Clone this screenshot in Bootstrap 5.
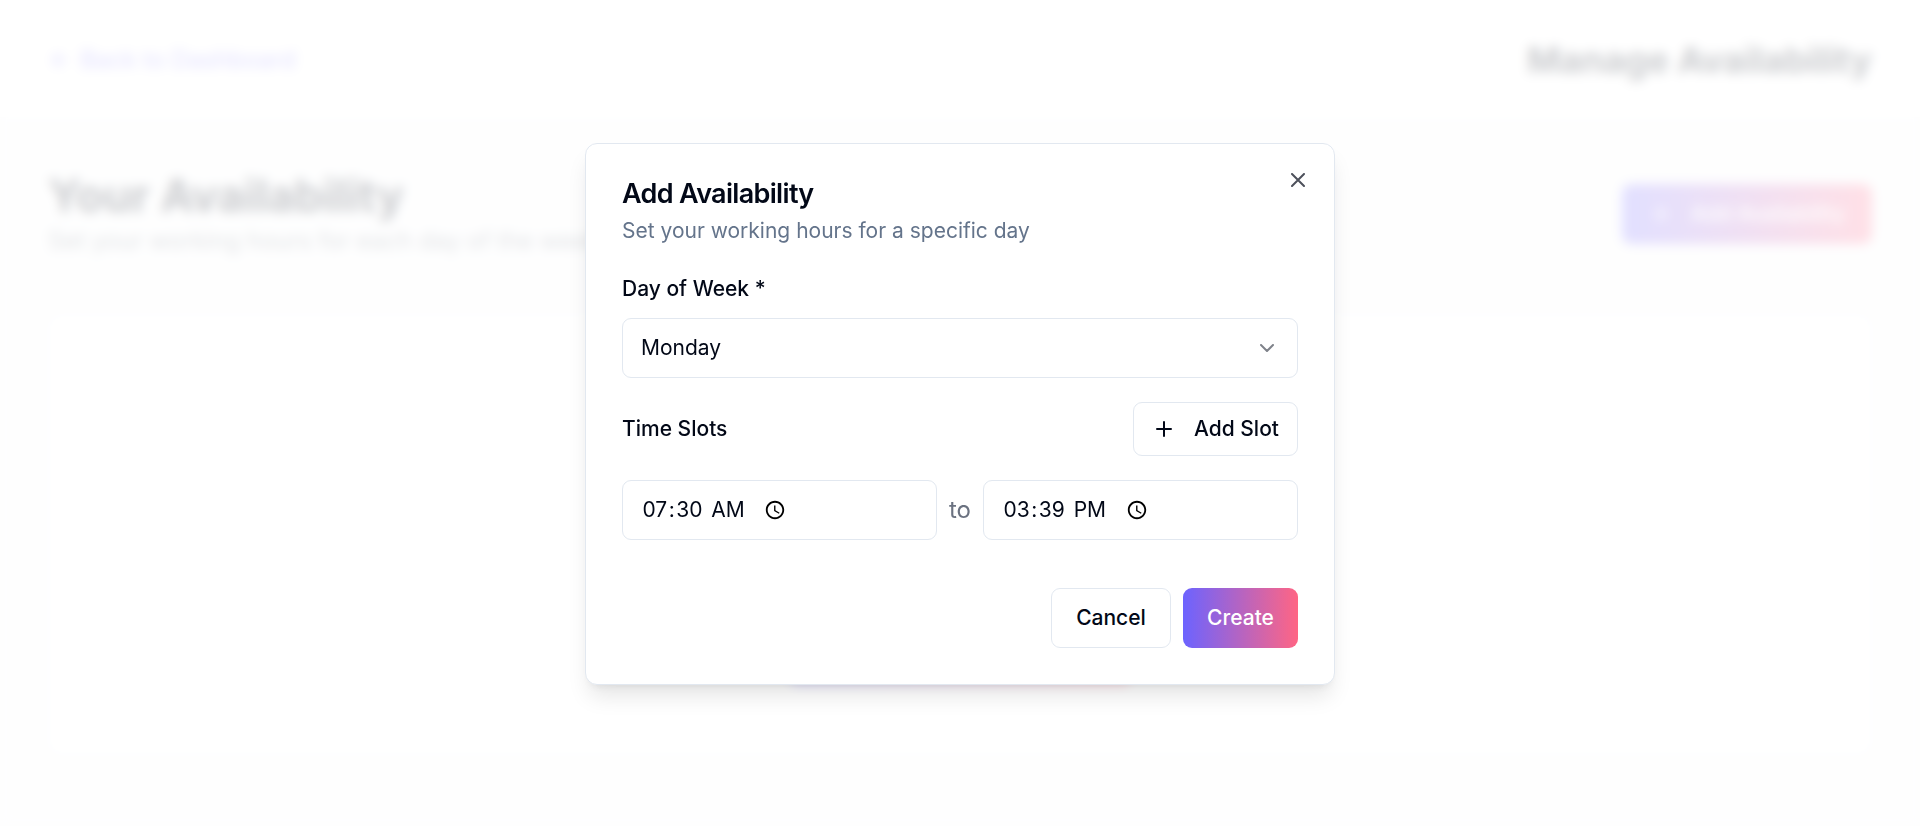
<!DOCTYPE html>
<html lang="en">
<head>
<meta charset="utf-8">
<title>Manage Availability</title>
<link href="https://cdn.jsdelivr.net/npm/bootstrap@5.3.0/dist/css/bootstrap.min.css" rel="stylesheet">
<style>
body{font-family:Inter,"Liberation Sans",sans-serif;font-size:24px;line-height:1.5;color:#020817;background:#f9fafb;height:826px;overflow:hidden}
svg{flex:none;fill:none;stroke:currentColor;stroke-width:2;stroke-linecap:round;stroke-linejoin:round}
.page-head{height:118px;padding:2px 48px 0;background:#fff;border-bottom:1px solid #f3f4f6}
.back-link{font-size:24px;color:#6c63ff;gap:8px}
.page-title{font-size:36px;font-weight:700;line-height:48px;color:#020817}
.page-main{padding:51px 48px}
.section-title{font-size:45px;font-weight:700;line-height:54px;color:#020817}
.section-note{color:#6b7280}
.grad{background:linear-gradient(90deg,#6c63ff,#ff6584);color:#fff;border:0}
.ctl{height:60px;font-size:21px;font-weight:500;line-height:30px;border-radius:9px;display:inline-flex;align-items:center;justify-content:center;padding:0 24px}
.empty-card{height:441px;background:#fff;border:1px solid #e5e7eb;border-radius:12px;padding-bottom:69px;margin-top:55px}
.empty-card .ctl{width:342px}
.veil{inset:0;background:rgba(255,255,255,.8);backdrop-filter:blur(6px);padding-top:2px}
.dialog-box{width:750px;height:542px;padding:36px;background:#fff;border:1px solid #e2e8f0;border-radius:12px;box-shadow:0 15px 22.5px -4.5px rgba(0,0,0,.1),0 6px 9px -6px rgba(0,0,0,.1)}
.dialog-title{font-size:27px;font-weight:600;line-height:27px;letter-spacing:-.675px;margin-bottom:9px}
.dialog-note{font-size:21px;line-height:30px;color:#64748b;margin-bottom:24px}
.field-name{font-size:21px;font-weight:500;line-height:36px}
.day-name{padding-top:1px;height:36px}
.field-box{height:60px;border:1px solid #e2e8f0;border-radius:9px;padding:0 18px;font-size:21px;line-height:30px;background:#fff;color:#020817}
.outline-ctl{background:#fff;border:1px solid #e2e8f0;color:#020817}
.slot-ctl{height:54px;width:165px;padding:0 14px 0 18px;gap:18px;justify-content:flex-start}
.time-box{flex:1 1 0;min-width:0}
.time-box::-webkit-datetime-edit{flex:none;padding-right:4px}
.time-box::-webkit-datetime-edit-hour-field,.time-box::-webkit-datetime-edit-minute-field,.time-box::-webkit-datetime-edit-ampm-field{padding:0 1.5px}
.time-box::-webkit-datetime-edit-ampm-field{margin-left:2px}
.time-box::-webkit-calendar-picker-indicator{margin-inline-start:15px}
.to-word{color:#6b7280;width:46px;text-align:center}
.close-x{top:24px;right:24px;opacity:.7;line-height:0}
</style>
<script src="https://cdn.jsdelivr.net/npm/bootstrap@5.3.0/dist/js/bootstrap.bundle.min.js"></script>
</head>
<body>
<header class="page-head d-flex align-items-center justify-content-between">
  <div class="back-link d-flex align-items-center"><svg width="24" height="24" viewBox="0 0 24 24"><path d="m12 19-7-7 7-7M19 12H5"/></svg>Back to Dashboard</div>
  <h1 class="page-title m-0">Manage Availability</h1>
</header>
<main class="page-main">
  <div class="d-flex align-items-center justify-content-between">
    <div>
      <h2 class="section-title m-0">Your Availability</h2>
      <div class="section-note">Set your working hours for each day of the week</div>
    </div>
    <div class="ctl grad" style="width:250px;gap:18px"><svg width="24" height="24" viewBox="0 0 24 24"><path d="M5 12h14M12 5v14"/></svg>Add Availability</div>
  </div>
  <div class="empty-card d-flex align-items-end justify-content-center"><div class="ctl grad"></div></div>
</main>

<div class="veil position-fixed d-flex align-items-center justify-content-center">
  <div class="dialog-box position-relative" role="dialog">
    <div class="close-x position-absolute"><svg width="24" height="24" viewBox="0 0 24 24"><path d="M18 6 6 18M6 6l12 12"/></svg></div>
    <h2 class="dialog-title">Add Availability</h2>
    <p class="dialog-note">Set your working hours for a specific day</p>
    <div class="field-name day-name">Day of Week *</div>
    <div class="field-box d-flex align-items-center justify-content-between" style="margin:12px 0 24px">
      <span>Monday</span>
      <svg width="24" height="24" viewBox="0 0 24 24" opacity=".5"><path d="m6 9 6 6 6-6"/></svg>
    </div>
    <div class="d-flex align-items-center justify-content-between">
      <span class="field-name">Time Slots</span>
      <button class="ctl outline-ctl slot-ctl"><svg width="24" height="24" viewBox="0 0 24 24"><path d="M5 12h14M12 5v14"/></svg>Add Slot</button>
    </div>
    <div class="d-flex align-items-center" style="margin:24px 0 48px">
      <input class="field-box time-box" type="time" value="07:30">
      <span class="to-word">to</span>
      <input class="field-box time-box" type="time" value="15:39">
    </div>
    <div class="d-flex justify-content-end" style="gap:12px">
      <button class="ctl outline-ctl" style="width:120px">Cancel</button>
      <button class="ctl grad" style="width:115px">Create</button>
    </div>
  </div>
</div>
</body>
</html>
